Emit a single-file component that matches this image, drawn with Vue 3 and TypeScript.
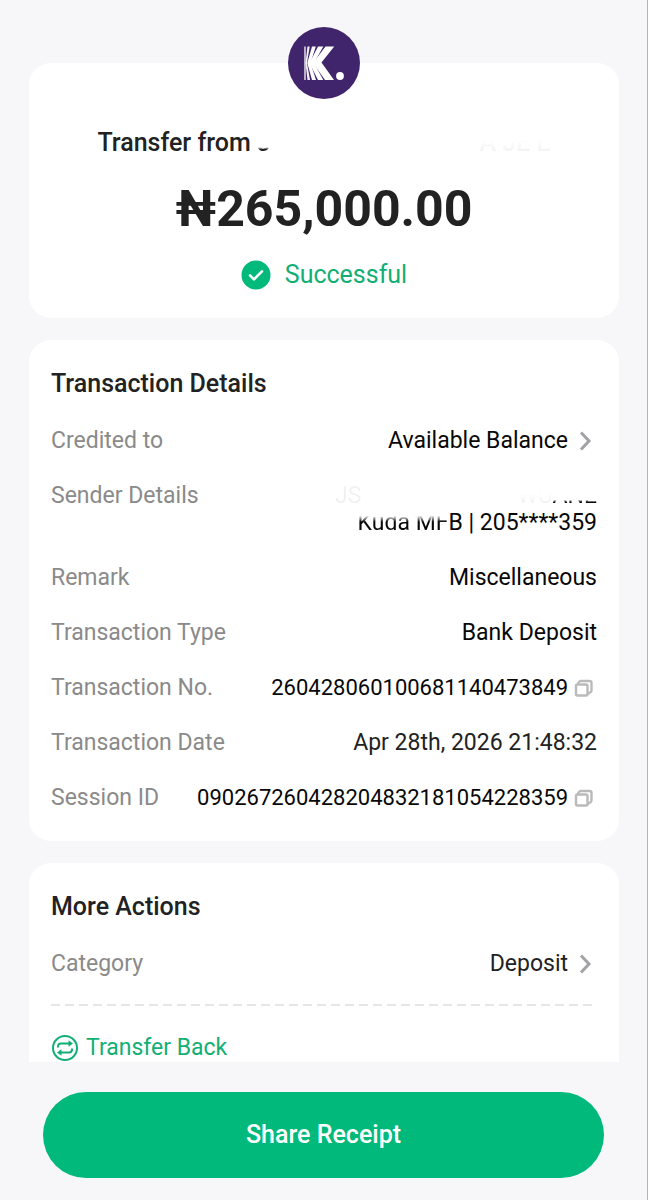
<script setup lang="ts">
interface DetailRow {
  label: string
  value: string
  kind: 'link' | 'sender' | 'text' | 'copy' | 'date'
}

const details: DetailRow[] = [
  { label: 'Credited to', value: 'Available Balance', kind: 'link' },
  { label: 'Sender Details', value: '', kind: 'sender' },
  { label: 'Remark', value: 'Miscellaneous', kind: 'text' },
  { label: 'Transaction Type', value: 'Bank Deposit', kind: 'text' },
  { label: 'Transaction No.', value: '260428060100681140473849', kind: 'copy' },
  { label: 'Transaction Date', value: 'Apr 28th, 2026 21:48:32', kind: 'date' },
  { label: 'Session ID', value: '090267260428204832181054228359', kind: 'copy' },
]

function copy(value: string) {
  navigator.clipboard?.writeText(value)
}
</script>

<template>
  <div class="page">
    <main class="content">
      <section class="card summary">
        <svg class="logo" viewBox="0 0 72 72" role="img" aria-label="Kuda">
          <circle cx="36" cy="36" r="36" fill="#40246c" />
          <g fill="#fff">
            <path d="M16.300 19.500h1.400v33.500h-1.400z" opacity=".9" />
            <path d="M19.500 19.500h2.200l-2.700 16.500 3 17h-2.500l-2-17z" opacity=".95" />
            <path d="M24 19.500h3.800L22.500 36l5.500 17h-4l-4.700-17z" />
            <path d="M30 19.500h5.300L26 36l9.300 17H30l-8.500-17z" />
            <path d="M37.500 19.500h8.700L33.500 35.500 46 53h-9L25 36z" />
            <circle cx="52" cy="49" r="3.900" />
          </g>
        </svg>
        <h1 class="sender-title">
          <span>Transfer from <span class="cut-low">J</span></span>
          <span class="faint cut-mid">A JE E</span>
        </h1>
        <p class="amount">₦265,000.00</p>
        <p class="status">
          <svg class="status-icon" viewBox="0 0 30 30" aria-hidden="true">
            <circle cx="15" cy="15" r="14.500" fill="#01b97a" />
            <path d="M9 15.300l4 4 8-8" fill="none" stroke="#fff" stroke-width="2.600" stroke-linecap="round" stroke-linejoin="round" />
          </svg>
          Successful
        </p>
      </section>

      <section class="card">
        <h2>Transaction Details</h2>
        <dl class="rows">
          <div v-for="row in details" :key="row.label" class="row">
            <dt>{{ row.label }}</dt>
            <dd :class="{ date: row.kind === 'date' }">
              <a v-if="row.kind === 'link'" href="#" class="go">
                {{ row.value }}
                <svg class="chevron" viewBox="0 0 24 24" aria-hidden="true"><path d="M8 3.500l8 8.500-8 8.500" /></svg>
              </a>
              <template v-else-if="row.kind === 'sender'">
                <span class="sender-name">
                  <span class="faint">JS</span>
                  <span><span class="faint cut-mid">WU</span><span class="cut-low">ANE</span></span>
                </span>
                <span><span class="cut-top">Kuda MF</span>B | 205****359</span>
              </template>
              <button v-else-if="row.kind === 'copy'" type="button" class="copy" :aria-label="`Copy ${row.label}`" @click="copy(row.value)">
                {{ row.value }}
                <svg class="copy-icon" viewBox="0 0 24 24" aria-hidden="true">
                  <rect x="3" y="8.500" width="11.500" height="11" rx="1.500" />
                  <path d="M4.500 8.500L6 6a2 2 0 0 1 1.700-1H16.500a2 2 0 0 1 2 2v7.500a2 2 0 0 1-1 1.700L14.500 18" />
                </svg>
              </button>
              <template v-else>{{ row.value }}</template>
            </dd>
          </div>
        </dl>
      </section>

      <section class="card">
        <h2>More Actions</h2>
        <dl class="rows">
          <div class="row">
            <dt>Category</dt>
            <dd class="date">
              <a href="#" class="go">
                Deposit
                <svg class="chevron" viewBox="0 0 24 24" aria-hidden="true"><path d="M8 3.500l8 8.500-8 8.500" /></svg>
              </a>
            </dd>
          </div>
        </dl>
        <div class="divider"></div>
        <a href="#" class="back">
          <svg class="back-icon" viewBox="0 0 28 28" fill="none" stroke="#12af75" stroke-width="2" aria-hidden="true">
            <circle cx="14" cy="14" r="12" />
            <path d="M7 13.500v-1a3 3 0 0 1 3-3h8M21 14.500v1a3 3 0 0 1-3 3h-8" />
            <path d="M17.500 6.200l4.500 3.300-4.500 3.300zM10.500 15.200L6 18.500l4.500 3.300z" fill="#12af75" stroke="none" />
          </svg>
          Transfer Back
        </a>
      </section>
    </main>

    <footer class="footer">
      <button type="button" class="share">Share Receipt</button>
    </footer>
  </div>
</template>

<style>
body {
  margin: 0;
  background: #f7f7fa;
}
</style>

<style scoped>
.page {
  box-sizing: border-box;
  display: flex;
  flex-direction: column;
  height: 100vh;
  border-right: 1px solid #b4b4b6;
  background: #f7f7fa;
  color: #222;
  font-family: Roboto, "Liberation Sans", sans-serif;
  font-size: 23px;
  line-height: 27px;
}
.content {
  flex: 1;
  min-height: 0;
  overflow: hidden;
  box-sizing: border-box;
  display: flex;
  flex-direction: column;
  gap: 22px;
  padding: 63px 28px 0 29px;
}
.card {
  flex: none;
  padding: 28px 22px 30px;
  border-radius: 22px;
  background: #fff;
}
h1, h2, p, dl, dd {
  margin: 0;
}
h1, h2 {
  font-size: 25px;
  line-height: 32px;
  font-weight: 500;
}
.summary {
  display: flex;
  flex-direction: column;
  align-items: center;
  padding-top: 0;
  padding-bottom: 27px;
}
.logo {
  width: 72px;
  height: 72px;
  margin-top: -36px;
}
.sender-title {
  display: flex;
  justify-content: space-between;
  width: 83%;
  margin-top: 28px;
}
.amount {
  margin-top: 20px;
  font-size: 50px;
  line-height: 60px;
  font-weight: 700;
}
.status {
  display: flex;
  align-items: center;
  gap: 14px;
  margin-top: 20px;
  font-size: 25px;
  line-height: 32px;
  color: #12af75;
}
.status-icon {
  width: 30px;
  height: 30px;
}
.rows {
  display: flex;
  flex-direction: column;
  gap: 28px;
  margin-top: 27px;
}
.row {
  display: flex;
  justify-content: space-between;
  gap: 16px;
}
dt {
  color: #8a8a8a;
  white-space: nowrap;
}
dd {
  display: flex;
  flex-direction: column;
  align-items: flex-end;
  color: #080808;
  white-space: nowrap;
}
dd.date {
  color: #222;
}
.go, .copy {
  display: flex;
  align-items: center;
  gap: 5px;
  padding: 0;
  border: 0;
  background: none;
  color: inherit;
  font: inherit;
  text-decoration: none;
}
.copy {
  font-size: 22px;
}
.chevron, .copy-icon {
  width: 24px;
  height: 24px;
  fill: none;
  stroke: #a2a2a6;
  stroke-width: 3;
}
.copy-icon {
  stroke: #bababa;
  stroke-width: 2.4;
}
.sender-name {
  display: flex;
  justify-content: space-between;
  width: 262px;
}
.faint {
  opacity: .05;
}
.cut-low {
  mask-image: linear-gradient(transparent 66%, #000 74%);
}
.cut-mid {
  mask-image: linear-gradient(transparent 40%, #000 75%);
}
.cut-top {
  mask-image: linear-gradient(transparent 24%, #000 48%);
}
.divider {
  height: 2px;
  margin-top: 27px;
  background: repeating-linear-gradient(90deg, #e6e6e6 0 9px, transparent 9px 14px);
}
.back {
  display: flex;
  align-items: center;
  gap: 7px;
  margin-top: 27px;
  line-height: 30px;
  color: #12af75;
  text-decoration: none;
}
.back-icon {
  width: 28px;
  height: 28px;
}
.footer {
  padding: 30px 43px 22px;
}
.share {
  width: 100%;
  height: 86px;
  border: 0;
  border-radius: 43px;
  background: #01b97a;
  color: #fff;
  font-family: inherit;
  font-size: 25px;
  line-height: 32px;
  font-weight: 500;
}
</style>
